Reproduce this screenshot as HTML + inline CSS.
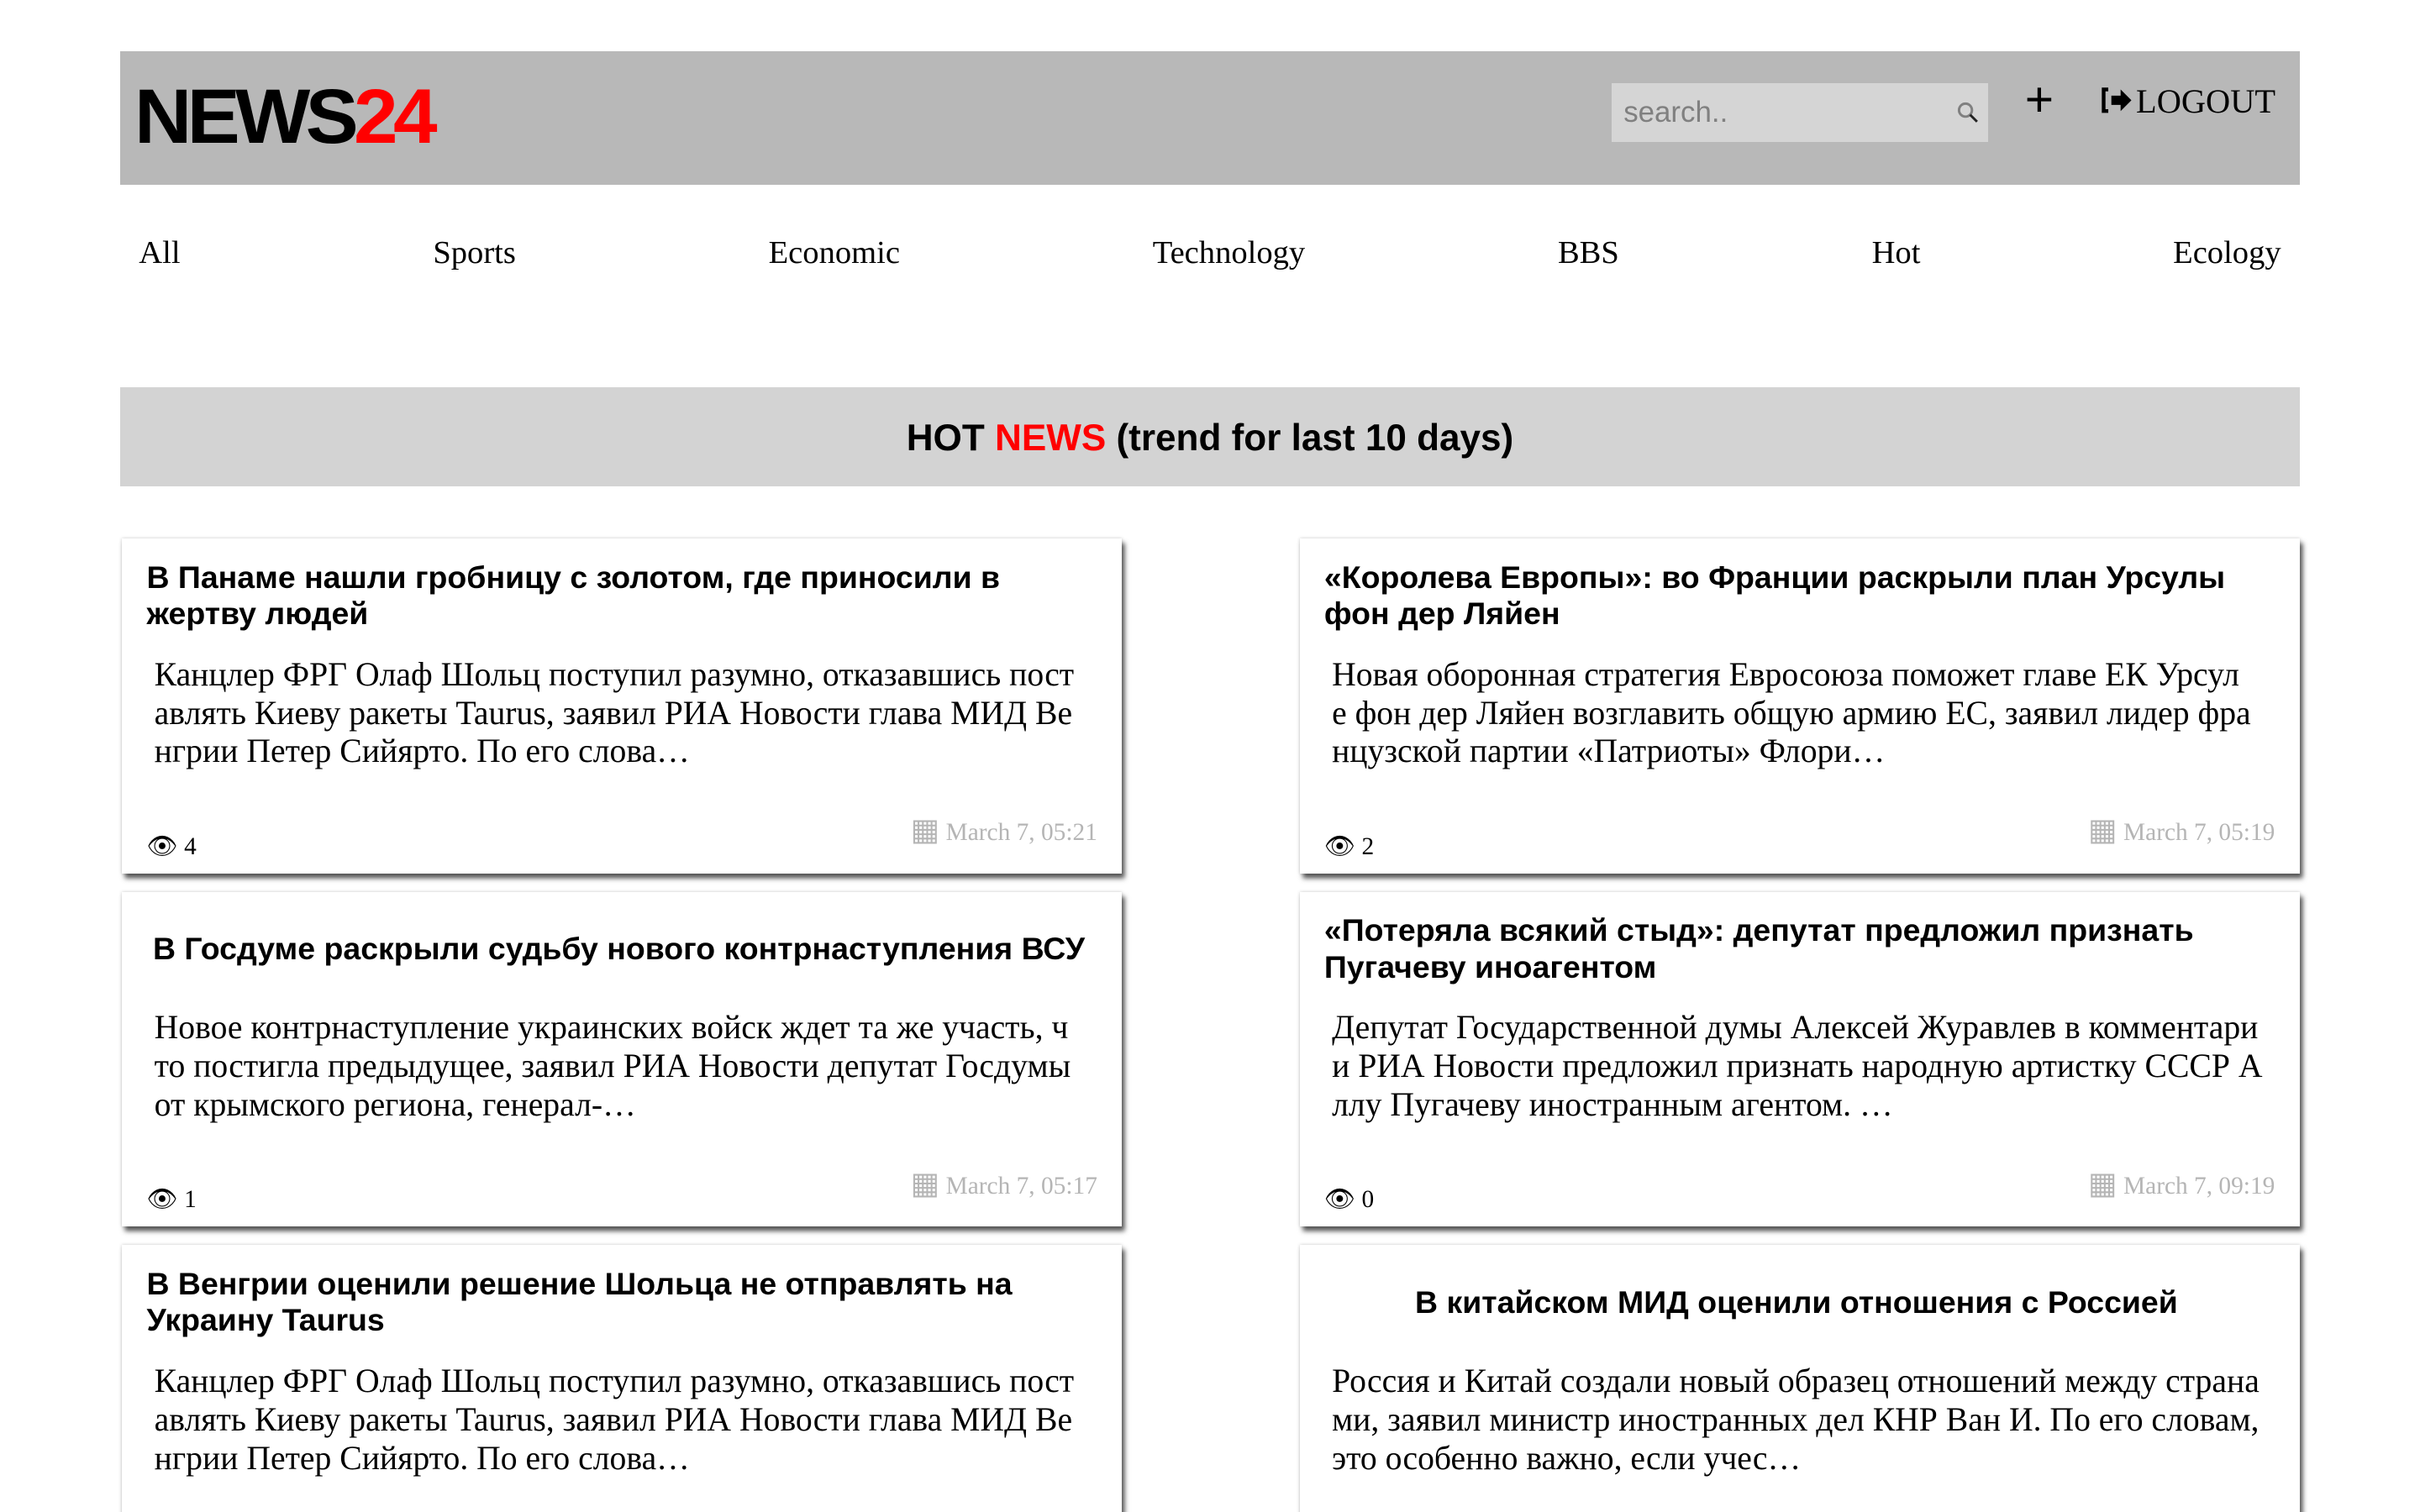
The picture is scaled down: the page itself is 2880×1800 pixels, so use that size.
<!DOCTYPE html>
<html style="width:2880px;height:1800px;overflow:hidden"><head><meta charset="utf-8"><style>
html,body{margin:0;padding:0;background:#fff}
body{width:1568px;height:980px;zoom:1.83673;overflow:hidden;position:relative;font-family:"Liberation Serif",serif}
.hdr{position:absolute;left:78px;top:33px;width:1412px;height:87px;background:#b8b8b8}
.logo{position:absolute;left:9px;top:18px;font-family:"Liberation Sans",sans-serif;font-weight:900;font-size:50px;line-height:50px;letter-spacing:-3px;transform:scaleX(1.03);transform-origin:left}
.logo b{color:#f00}
.search{position:absolute;left:966px;top:21px;width:244px;height:38px;background:#d5d5d5;font-family:"Liberation Sans",sans-serif;font-size:19px;color:#808080;line-height:38px;text-indent:8px}
.plus{position:absolute;left:1234px;top:15px;font-family:"Liberation Sans",sans-serif;font-size:32px;line-height:34px}
.logout{position:absolute;left:1282px;top:20px;font-size:22px;line-height:26px}
.nav{position:absolute;left:90px;top:152px;width:1388px;display:flex;justify-content:space-between;font-size:21px}
.hot{position:absolute;left:78px;top:251px;width:1412px;height:64px;background:#d3d3d3;text-align:center;font-family:"Liberation Sans",sans-serif;font-weight:bold;font-size:24px;line-height:66px}
.hot span{color:#f00}
.card{position:absolute;width:648px;height:217px;background:#fff;box-shadow:2px 3px 3px #555,0 0 2px #ccc}
.t{position:absolute;left:16px;right:20px;top:12px;height:50px;display:flex;align-items:center;justify-content:center;font-family:"Liberation Sans",sans-serif;font-weight:bold;font-size:20.4px;line-height:23.5px}
.b{position:absolute;left:21px;top:76px;font-size:21.6px;line-height:25px;white-space:nowrap}
.eye{position:absolute;left:16px;top:191px;font-size:16px;line-height:18px}
.date{position:absolute;right:16px;top:177px;font-size:16px;color:#b5b5b5}
.date i{font-style:normal;font-size:20px}
</style></head><body>
<div class="hdr">
<div class="logo">NEWS<b>24</b></div>
<div class="search">search..<svg style="position:absolute;left:224px;top:12px" width="14" height="14" viewBox="0 0 14 14"><circle cx="5.5" cy="5.5" r="4.2" fill="none" stroke="#808080" stroke-width="1.6"/><path d="M8.5 8.5L13 13" stroke="#222" stroke-width="1.6"/></svg></div>
<div class="plus">+</div>
<div class="logout"><svg width="24" height="20" viewBox="0 0 22 20" style="vertical-align:-2px"><path d="M5 3H2v14h3" fill="none" stroke="#000" stroke-width="2.4"/><path d="M7 7h6V3l7 7-7 7v-4H7z" fill="#000"/></svg>LOGOUT</div>
</div>
<div class="nav"><span>All</span><span>Sports</span><span>Economic</span><span>Technology</span><span>BBS</span><span>Hot</span><span>Ecology</span></div>
<div class="hot">HOT <span>NEWS</span> (trend for last 10 days)</div>

<div class="card" style="left:79px;top:349px"><div class="t"><div>В Панаме нашли гробницу с золотом, где приносили в жертву людей</div></div>
<div class="b">Канцлер ФРГ Олаф Шольц поступил разумно, отказавшись пост<br>авлять Киеву ракеты Taurus, заявил РИА Новости глава МИД Ве<br>нгрии Петер Сийярто. По его слова…</div>
<div class="eye">👁 4</div><div class="date"><i>▦</i> March 7, 05:21</div></div>

<div class="card" style="left:842px;top:349px"><div class="t"><div>«Королева Европы»: во Франции раскрыли план Урсулы фон дер Ляйен</div></div>
<div class="b">Новая оборонная стратегия Евросоюза поможет главе ЕК Урсул<br>е фон дер Ляйен возглавить общую армию ЕС, заявил лидер фра<br>нцузской партии «Патриоты» Флори…</div>
<div class="eye">👁 2</div><div class="date"><i>▦</i> March 7, 05:19</div></div>

<div class="card" style="left:79px;top:578px"><div class="t"><div>В Госдуме раскрыли судьбу нового контрнаступления ВСУ</div></div>
<div class="b">Новое контрнаступление украинских войск ждет та же участь, ч<br>то постигла предыдущее, заявил РИА Новости депутат Госдумы<br>от крымского региона, генерал-…</div>
<div class="eye">👁 1</div><div class="date"><i>▦</i> March 7, 05:17</div></div>

<div class="card" style="left:842px;top:578px"><div class="t"><div>«Потеряла всякий стыд»: депутат предложил признать Пугачеву иноагентом</div></div>
<div class="b">Депутат Государственной думы Алексей Журавлев в комментари<br>и РИА Новости предложил признать народную артистку СССР А<br>ллу Пугачеву иностранным агентом. …</div>
<div class="eye">👁 0</div><div class="date"><i>▦</i> March 7, 09:19</div></div>

<div class="card" style="left:79px;top:807px"><div class="t"><div>В Венгрии оценили решение Шольца не отправлять на Украину Taurus</div></div>
<div class="b">Канцлер ФРГ Олаф Шольц поступил разумно, отказавшись пост<br>авлять Киеву ракеты Taurus, заявил РИА Новости глава МИД Ве<br>нгрии Петер Сийярто. По его слова…</div></div>

<div class="card" style="left:842px;top:807px"><div class="t"><div>В китайском МИД оценили отношения с Россией</div></div>
<div class="b">Россия и Китай создали новый образец отношений между страна<br>ми, заявил министр иностранных дел КНР Ван И. По его словам,<br>это особенно важно, если учес…</div></div>
</body></html>
